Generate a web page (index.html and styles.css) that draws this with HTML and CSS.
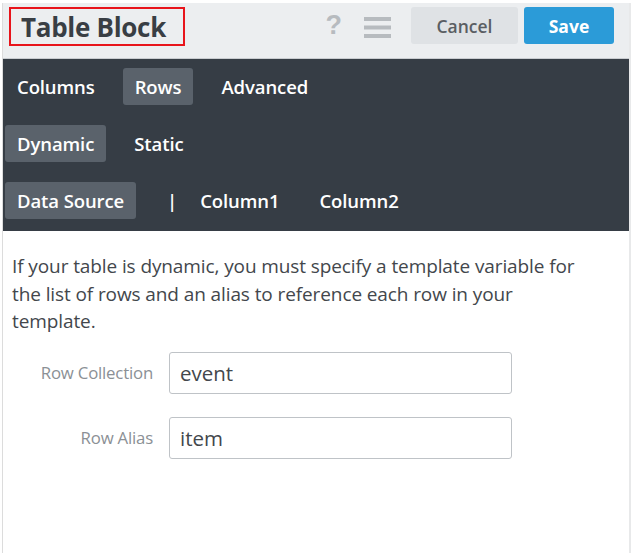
FILE: index.html
```html
<!DOCTYPE html>
<html>
<head>
<meta charset="utf-8">
<link rel="stylesheet" href="styles.css">
</head>
<body>
<div class="panel">
  <header class="header">
    <div class="title-box"><h1 class="title">Table Block</h1></div>
    <div class="spacer"></div>
    <span class="help">?</span>
    <svg class="menu" width="27" height="21" viewBox="0 0 27 21"><rect x="0" y="0" width="27" height="4" fill="#b7bbbf"/><rect x="0" y="8.5" width="27" height="4" fill="#b7bbbf"/><rect x="0" y="17" width="27" height="4" fill="#b7bbbf"/></svg>
    <button class="btn btn-cancel">Cancel</button>
    <button class="btn btn-save">Save</button>
  </header>
  <nav class="nav">
    <div class="nav-row">
      <span class="tab">Columns</span>
      <span class="tab active">Rows</span>
      <span class="tab">Advanced</span>
    </div>
    <div class="nav-row">
      <span class="tab active">Dynamic</span>
      <span class="tab">Static</span>
    </div>
    <div class="nav-row">
      <span class="tab active">Data Source</span>
      <span class="tab sep">|</span>
      <span class="tab">Column1</span>
      <span class="tab">Column2</span>
    </div>
  </nav>
  <section class="content">
    <p class="desc">If your table is dynamic, you must specify a template variable for the list of rows and an alias to reference each row in your template.</p>
    <div class="form">
      <label class="label">Row Collection</label>
      <div class="input">event</div>
      <label class="label">Row Alias</label>
      <div class="input">item</div>
    </div>
  </section>
</div>
</body>
</html>
```
FILE: styles.css
```css
* { box-sizing: border-box; }
html, body { margin: 0; padding: 0; background: #fff; }
body { font-family: "Open Sans", Lato, sans-serif; }

.panel {
  margin: 3px 0 0 2px;
  width: 629px;
  height: 550px;
  border-left: 1px solid #dcdcdc;
  border-right: 2px solid #e8e9ea;
}

.header {
  height: 56px;
  background: #eceef0;
  border-bottom: 1px solid #c9ccd0;
  display: flex;
  align-items: flex-start;
  padding: 4px 0 0 6px;
}

.title-box {
  width: 176px;
  height: 39px;
  border: 2px solid #e8141b;
  display: flex;
  align-items: center;
  padding-left: 10px;
}

.title {
  margin: 0;
  font-size: 26px;
  font-weight: 700;
  color: #393e44;
  letter-spacing: -0.3px;
}

.spacer { flex: 1; }

.help {
  font-family: "Liberation Sans", sans-serif;
  font-weight: 700;
  font-size: 27px;
  line-height: 37px;
  color: #b7bbbf;
  margin-right: 22px;
}

.menu { margin-top: 10px; margin-right: 20px; }

.btn {
  height: 37px;
  border: none;
  border-radius: 3px;
  font-family: "Open Sans", Lato, sans-serif;
  font-size: 17.5px;
  font-weight: 600;
  padding: 0;
}

.btn-cancel {
  width: 107px;
  background: #dfe2e5;
  color: #5a5e63;
  margin-right: 6px;
}

.btn-save {
  width: 90px;
  background: #2b9bd8;
  color: #fff;
  font-weight: 700;
  margin-right: 15px;
}

.nav {
  background: #363d45;
  height: 172px;
  padding: 9px 0 0 2px;
  display: flex;
  flex-direction: column;
  gap: 20px;
}

.nav-row {
  display: flex;
  gap: 16px;
  height: 37px;
}

.tab {
  height: 37px;
  line-height: 37px;
  padding: 0 12px;
  color: #fff;
  font-size: 18.5px;
  font-weight: 600;
  border-radius: 3px;
  letter-spacing: -0.1px;
}

.tab.active { background: #5a626b; }
.tab.sep { padding: 0 0 0 15px; margin-right: -5px; }

.content {
  padding: 22px 0 0 9px;
}

.desc {
  margin: 0;
  font-size: 19px;
  line-height: 27.5px;
  color: #43474c;
  width: 575px;
  letter-spacing: -0.1px;
}

.form {
  margin-top: 16px;
  display: grid;
  grid-template-columns: 141px 343px;
  column-gap: 16px;
  row-gap: 23px;
  margin-left: -9px;
  padding-left: 9px;
}

.label {
  font-size: 16.8px;
  color: #8b9095;
  text-align: right;
  padding-top: 9px;
  letter-spacing: -0.2px;
}

.input {
  height: 42px;
  border: 1px solid #bfc3c7;
  border-radius: 3px;
  padding: 0 10px;
  font-size: 20.5px;
  line-height: 40px;
  color: #43474c;
}
```
